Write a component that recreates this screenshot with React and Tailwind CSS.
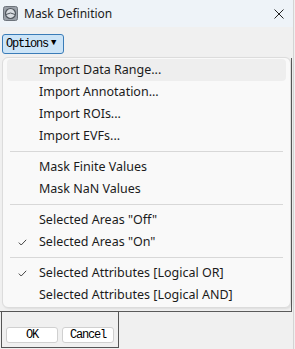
import React from "react";

const groups = [
  [{ label: "Import Data Range...", hover: true }, { label: "Import Annotation..." }, { label: "Import ROIs..." }, { label: "Import EVFs..." }],
  [{ label: "Mask Finite Values" }, { label: "Mask NaN Values" }],
  [{ label: 'Selected Areas "Off"' }, { label: 'Selected Areas "On"', checked: true }],
  [{ label: "Selected Attributes [Logical OR]", checked: true }, { label: "Selected Attributes [Logical AND]" }],
];

const WinIcon = () => (
  <svg width="15" height="15" viewBox="0 0 15 15" className="shrink-0">
    <rect x="0.5" y="0.5" width="14" height="14" rx="2" fill="#9aa0a8" stroke="#6d737b" />
    <circle cx="7.5" cy="7.5" r="5" fill="#d9dde2" stroke="#4f555c" strokeWidth="1.2" />
    <path d="M3 8.5 Q7.5 5.5 12 8.5" fill="none" stroke="#4f555c" strokeWidth="1" />
  </svg>
);

const Check = () => (
  <svg width="9" height="7" viewBox="0 0 9 7">
    <path d="M0.8 3.6 L3.2 6 L8.2 0.8" fill="none" stroke="#444" strokeWidth="1" />
  </svg>
);

const App = () => {
  return (
    <div className="relative w-[295px] h-[349px] bg-[#f0f0f0] overflow-hidden font-['Noto_Sans',sans-serif] text-[#1b1b1b]">
      <div className="w-[294px] h-full border-r border-[#d4d4d4]">
        {/* title bar */}
        <div className="h-[27px] bg-[#eef3f8] flex items-center pl-[3px] pr-[9px]">
          <WinIcon />
          <span className="ml-[6px] text-[12px] leading-none">Mask Definition</span>
          <svg width="10" height="10" viewBox="0 0 10 10" className="ml-auto">
            <path d="M0.5 0.5 L9.5 9.5 M9.5 0.5 L0.5 9.5" stroke="#222" strokeWidth="1" />
          </svg>
        </div>

        {/* toolbar */}
        <div className="pt-[7px] pl-[2px]">
          <button className="w-[62px] h-[20px] border border-[#3a7cb8] rounded-[3px] bg-[#cce4f7] flex items-center pl-[3px] font-['Liberation_Mono',monospace] text-[12px] tracking-[-1.2px] text-black">
            Options
            <span className="ml-[3px] text-[9px] tracking-normal">▼</span>
          </button>
        </div>

        {/* content frame behind the menu */}
        <div className="mt-[4px] h-[254px] w-[292px] border-r border-b border-[#5a5a5a]" />

        {/* button box */}
        <div className="-mt-px ml-px w-[118px] h-[37px] border border-[#555] flex items-end gap-[4px] pl-[4px] pb-[4px]">
          <button className="w-[52px] h-[16px] bg-white border border-[#d0d0d0] rounded-[3px] font-['Liberation_Mono',monospace] text-[12px] tracking-[-1.2px] leading-none text-black">
            OK
          </button>
          <button className="w-[52px] h-[16px] bg-white border border-[#d0d0d0] rounded-[3px] font-['Liberation_Mono',monospace] text-[12px] tracking-[-1.2px] leading-none text-black">
            Cancel
          </button>
        </div>
      </div>

      {/* dropdown menu */}
      <div className="absolute left-[2px] top-[57px] w-[289px] bg-[#f9f9f9] border border-[#dcdcdc] rounded-[6px] py-[1px] shadow-[1px_1px_2px_rgba(0,0,0,0.08)]">
        {groups.map((g, gi) => (
          <div key={gi}>
            {gi > 0 && <div className="my-[4px] mx-[7px] h-px bg-[#d8d8d8]" />}
            {g.map((it, i) => (
              <div
                key={i}
                className={`mx-[4px] h-[22px] rounded-[4px] flex items-center text-[12.5px] ${it.hover ? "bg-[#eeeeee]" : ""}`}
              >
                <span className="w-[32px] flex justify-center pr-[2px]">{it.checked && <Check />}</span>
                <span className="leading-none">{it.label}</span>
              </div>
            ))}
          </div>
        ))}
      </div>
    </div>
  );
};

export default App;
